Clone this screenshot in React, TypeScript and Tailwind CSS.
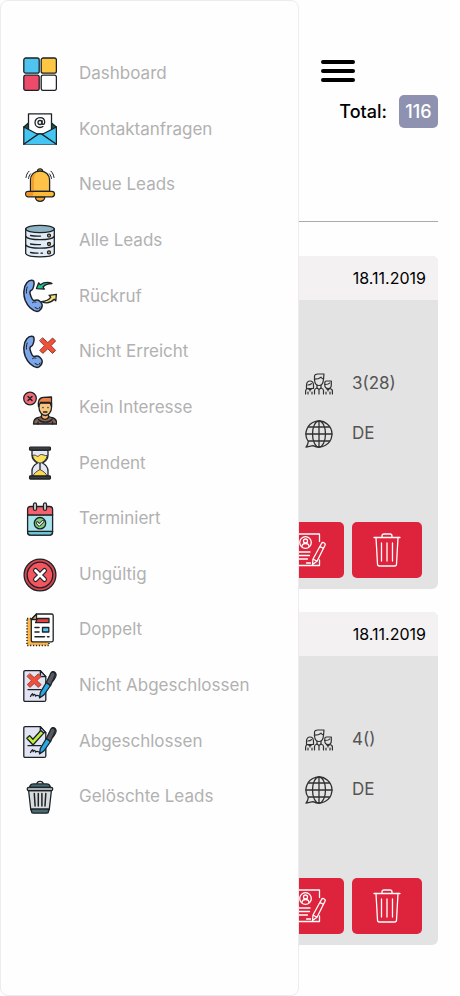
import type { ReactNode } from "react";

const INK = "#1c2226";

function Icon({ children }: { children: ReactNode }) {
  return (
    <svg
      width={34}
      height={34}
      viewBox="0 0 34 34"
      fill="none"
      stroke={INK}
      strokeWidth={1.3}
      strokeLinecap="round"
      strokeLinejoin="round"
      aria-hidden="true"
      className="shrink-0"
    >
      {children}
    </svg>
  );
}

function DashboardIcon() {
  return (
    <Icon>
      <rect x="0.8" y="1" width="15.4" height="15.2" rx="2" fill="#4fc4ee" />
      <rect x="18.2" y="1" width="15.2" height="15.2" rx="2" fill="#fdc743" />
      <rect x="0.8" y="18.2" width="15.4" height="15.2" rx="2" fill="#ee4a6a" />
      <rect x="18.2" y="18.2" width="15.2" height="15.2" rx="2" fill="#fff" />
    </Icon>
  );
}

function MailIcon() {
  return (
    <Icon>
      <path d="M0.8 15 5.5 11h23l4.9 4L28 20H6z" fill="#12584f" />
      <path d="M5.5 22V1.8h23V22z" fill="#fff" />
      <path d="M0.8 15 17 23.5 33.4 15v17.2H0.8z" fill="#45c5f2" />
      <path d="M0.8 32.2 14.5 22.6c1.6-1 3.4-1 5 0l13.9 9.6" fill="#45c5f2" />
      <circle cx="17" cy="10.5" r="2" />
      <path d="M19 8.6v2.6c0 2 2.7 1.6 2.7-1 0-2.8-2-4.6-4.7-4.6s-5 2.1-5 4.9 2.2 5 5 5c1.2 0 2.2-.3 3-.9" />
    </Icon>
  );
}

function BellIcon() {
  return (
    <Icon>
      <path d="M12.4 28.8c0 6 9.4 6 9.4 0z" fill="#f6a532" />
      <path d="M14.6 2.8c0-2.6 4.9-2.6 4.9 0v1.4h-4.9z" fill="#f6a532" />
      <path d="M7.5 23.5V12c0-5.4 4-9 9.5-9s9.6 3.6 9.6 9v11.5z" fill="#fdc247" />
      <path d="M8.3 22.8V12c0-4 2-6.5 5-7.5-2 3-2.4 6-2.4 9v9.3z" fill="#f29e2c" stroke="none" />
      <rect x="2.6" y="23.3" width="28.9" height="5.5" rx="2.7" fill="#fdb93a" />
      <path d="M5.2 28h4.5l1-4H5.2c-2.6 0-2.6 4 0 4z" fill="#ef9427" stroke="none" />
      <path d="M3 9.5c.3-2.5 1.3-4.6 3-6.3M5.6 10.5c.1-1.8.8-3.4 2-4.7M31 9.5c-.3-2.5-1.3-4.6-3-6.3M28.4 10.500c-.1-1.8-.8-3.4-2-4.7" strokeWidth="1" />
    </Icon>
  );
}

function DatabaseIcon() {
  return (
    <Icon>
      <path d="M2.7 5v24.5C5 34 29 34 31.3 29.5V5z" fill="#e2ecf5" />
      <ellipse cx="17" cy="5" rx="14.3" ry="3.7" fill="#91b4c4" />
      <path d="M2.7 12.5c3 4.2 25.6 4.2 28.6 0M2.7 21c3 4.2 25.6 4.2 28.6 0" />
      <path d="M7.5 11.5c3.5.7 6.500.8 10 .6M7.5 20c3.5.7 6.500.8 10 .6M7.5 28.5c2.5.6 5 .8 7.500.7M18 29.2h1.5" />
      <circle cx="26" cy="11.6" r="1.5" fill="#f0a84c" />
      <circle cx="26" cy="20" r="1.5" fill="#f0a84c" />
      <circle cx="26" cy="28.4" r="1.5" fill="#f0a84c" />
    </Icon>
  );
}

function Handset() {
  return (
    <>
      <path
        d="M4 3.6C5.5 1.7 8 1 9.9 1.500c1.5.5 1.4 2 1 4.5-.4 2.3-.8 4.6-2.6 5.2-2 .7-1.5 3.3-.4 6 1 2.6 2 4.5 3.4 4.3 1.7-.3 2.5-.7 4-.2 1.7.7 3.9 3.2 3.9 5 0 2.6-2.3 6-5 6.3-5.500-1.2-9.700-5.600-12-11.300C.2 16 .2 8.2 4 3.6z"
        fill="#7da7ec"
        strokeWidth="1.5"
      />
      <path d="M9.5 23.6c1.4-.8 2.5-.9 3.5-.4M12 28.5l2.6 1.2M16 29.5l1-1.500M4.2 8c-.8 2-.9 4-.7 6" strokeWidth="1" />
    </>
  );
}

function CallbackIcon() {
  return (
    <Icon>
      <Handset />
      <path d="M13.5 9.6 15.7 3.800l1.600 2C21 3.2 25 2.800 29 4.500c-4 0-7 1.200-9 3.500l1.400 2z" fill="#1fc58e" />
      <path d="M18.5 22.6c4.7-.3 7.6-2 9.3-4.5l-1.7-1.8 7.3-1-.6 6.5-1.6-1.5c-3.4 3.5-8 4.6-12.7 2.3z" fill="#fbe07a" />
    </Icon>
  );
}

function UnreachedIcon() {
  return (
    <Icon>
      <Handset />
      <path d="m19.8 3 5 4.6L29.6 3l3 3-4.6 4.7 4.6 4.7-3 3-4.8-4.6-5 4.6-3-3 4.7-4.7L16.8 6z" fill="#f0503a" stroke="#8e3a30" strokeWidth="1" />
    </Icon>
  );
}

function NoInterestIcon() {
  return (
    <Icon>
      <path d="M10.5 33c0-4 1.3-5.8 5-6.5l3-1h7l3 1c4 .7 5.3 2.5 5.3 6.5z" fill="#8b6354" />
      <path d="M18.5 22v4.5c1.8 2.5 5.2 2.5 7 0V22z" fill="#f3b36b" />
      <path d="M16 12h12.5v4.5c0 4.5-3 8-6.2 8S16 21 16 16.5z" fill="#fbc680" />
      <path d="M15.5 15.5c-.8-5 .5-9 5-9.2l8-.3v9.5l-1.5-4h-9.5z" fill="#f18246" />
      <path d="M15.5 28.5c3 3.6 10.5 3.6 13.5 0M20 16.5v.2M25 16.5v.2M20.5 21h3.5M15 31v2M29.5 31v2" />
      <circle cx="7" cy="7.5" r="6.3" fill="#f56b78" />
      <path d="m5 5.5 4 4m0-4-4 4" strokeWidth="1.5" />
    </Icon>
  );
}

function HourglassIcon() {
  return (
    <Icon>
      <path d="M9 4h16v5c0 4-2.8 6.5-5.5 8 2.7 1.5 5.5 4 5.5 8v5H9v-5c0-4 2.8-6.5 5.5-8C11.800 15.5 9 13 9 9z" fill="#e6e8f5" />
      <path d="M9.5 9.5c2.5-1.5 3.5.5 5 .8 1.6.3 2-2 4-1.8 2.300.2 3.500 1.500 5.800 1-.8 4-3.600 6.200-6.300 7.500h-2C13 15.5 10.2 13.5 9.5 9.5z" fill="#fde05b" strokeWidth=".8" />
      <path d="M10 30c.8-3 3.5-4.5 7-6.500 3.5 2 6.2 3.5 7 6.500z" fill="#fdd84f" strokeWidth=".8" />
      <path d="M17 17.5V23" />
      <rect x="6.6" y="1.2" width="20.8" height="3" rx=".8" fill="#3c4043" />
      <rect x="6.6" y="30" width="20.8" height="3" rx=".8" fill="#3c4043" />
    </Icon>
  );
}

function CalendarIcon() {
  return (
    <Icon>
      <path d="M4.6 12.5h25V30c0 2-1 3.2-3 3.2h-19c-2 0-3-1.2-3-3.2z" fill="#a6e3ea" />
      <path d="M4.6 29.3h25c-.3 2.6-1 3.9-3 3.9h-19c-2 0-3-1.3-3-3.9z" fill="#6fc3d6" />
      <path d="M4.6 13V7.5c0-2 1-3 3-3h19c2 0 3 1 3 3V13z" fill="#f4636d" />
      <rect x="10.5" y=".9" width="3" height="7.5" rx="1.5" fill="#dfe3e6" />
      <rect x="20.5" y=".9" width="3" height="7.5" rx="1.5" fill="#dfe3e6" />
      <circle cx="17" cy="21.2" r="5.7" fill="#83cf7c" />
      <path d="m14.2 20.8 2 2.2 3.7-3.5" strokeWidth="3" />
      <path d="m14.2 20.8 2 2.2 3.7-3.5" stroke="#fff" strokeWidth="1.2" />
    </Icon>
  );
}

function InvalidIcon() {
  return (
    <Icon>
      <circle cx="17" cy="17" r="15.9" fill="#dc4450" />
      <circle cx="17" cy="17" r="12.8" fill="#f4565f" />
      <path d="m12.5 12.5 9 9m0-9-9 9" strokeWidth="5" />
      <path d="m12.5 12.5 9 9m0-9-9 9" stroke="#fff" strokeWidth="2.8" />
    </Icon>
  );
}

function DuplicateIcon() {
  return (
    <Icon>
      <path d="M4 5.5h22v27H4z" fill="#fdb548" strokeDasharray="1.2 1.7" strokeLinecap="butt" strokeWidth="1.5" />
      <path d="M8.3 6.5 13.5 1h15c1.2 0 1.7.5 1.7 1.7v24.5c0 1.2-.5 1.7-1.7 1.7H10c-1.2 0-1.700-.5-1.700-1.700z" fill="#fff" />
      <path d="M8.3 6.5 13.5 1v5.5z" fill="#fdb548" />
      <path d="M14.5 5.5H26v4.2H12.5z" fill="#e93f43" />
      <path d="M19.5 14.5h6.3V19h-6.3z" fill="#55c8f2" />
      <path d="M12 14.5h4M12 19h4M12 23.8h9.5M24.5 23.8H26" strokeWidth="1.5" />
    </Icon>
  );
}

function Contract() {
  return (
    <>
      <path d="M2.3 1.6h15l5.5 6v23.3c0 1-.5 1.5-1.5 1.5h-19c-1 0-1.5-.5-1.5-1.5V3.1c0-1 .5-1.5 1.5-1.5z" fill="#e2e4f4" />
      <path d="M17.3 1.6v6h5.5z" fill="#c4c7dc" />
      <path d="M5 20.7h13M7.5 27.5c1.5-3.5 2.5-3.5 2.6-.8 1.2-2 2-1.5 2.4.3 1.3-1 2-.8 3.5 0" />
    </>
  );
}

function Pen() {
  return (
    <>
      <path d="M28.5 3.5c2.500-2 5.5.5 4.2 4-1 2-1.8 3.7-3.2 5" />
      <path d="m17.3 23.5 6-10 4.3 3-6.7 9.500-4.4 2.900z" fill="#27a9e5" />
      <path d="m23.300 13.500 4.500-9.300c1.300-2.500 5.500-.5 4.200 2.200l-4.400 10.100z" fill="#585863" />
    </>
  );
}

function NotClosedIcon() {
  return (
    <Icon>
      <Contract />
      <path d="m7 4.8 4.2 3.7 4.2-3.7 2.8 2.8-4.3 4 4.3 4-2.8 2.8-4.2-3.8L7 18.4l-2.8-2.8 4.2-4-4.2-4z" fill="#f0503a" stroke="#8e3a30" strokeWidth=".8" />
      <Pen />
    </Icon>
  );
}

function ClosedIcon() {
  return (
    <Icon>
      <Contract />
      <path d="m3.800 13.300 2.900-2.700 3.200 3.600L17.800 5.500l2.900 2.600L10 20z" fill="#c3ef43" />
      <Pen />
    </Icon>
  );
}

function BinIcon() {
  return (
    <Icon>
      <path d="M13.8 4.5c0-4.3 6.5-4.3 6.5 0" />
      <path d="M5.6 10.5 7.8 30h18.4l2.2-19.5z" fill="#d8dbdd" />
      <path d="M8.5 29h17v2.5c0 1-.6 1.7-1.6 1.7H10.1c-1 0-1.6-.7-1.6-1.7z" fill="#486a75" />
      <path d="M6.6 7.5c.3-2.3 1.4-3.6 4-3.6h12.8c2.6 0 3.7 1.3 4 3.6z" fill="#486a75" />
      <rect x="4.3" y="7.3" width="25.4" height="3.4" rx="1.5" fill="#a5afb3" />
      <path d="m11.3 13.5.8 12.5M15.3 13.5V26M18.9 13.5V26M22.8 13.5 22 26" strokeWidth="1.5" />
    </Icon>
  );
}

function PeopleIcon() {
  return (
    <svg width={28} height={22} viewBox="0 0 28 22" fill="none" stroke="#303030" strokeWidth={1.2} strokeLinecap="round" strokeLinejoin="round" aria-hidden="true">
      <path d="M9.5 7V3.5C9.5 1.5 11 1 13 1h6l-.6 6c-.3 3.5-2 5.5-4.4 5.5S9.800 10.5 9.5 7z" />
      <path d="M9.5 6.200c3 0 5-.6 6.500-2 .6 1 1.500 1.500 2.600 1.700M12 12v3l2 1.500 2-1.500v-3M14 16.5V21" />
      <path d="M1.5 12.5C1.5 9.5 3 8 5 8s3.5 1.5 3.5 4.500v3h-7z" />
      <path d="M2.8 12c2 0 3-.5 3.7-1.300M3 15.5 5 17l2-1.500M.6 21v-3c0-1.200.7-2 2-2.500M5 17v1M3 19v2M7 19v2" />
      <path d="M19.8 12V9.500c0-1 .6-1.500 1.700-1.500h4.800v4c0 2.200-1.500 3.500-3.200 3.500s-3.300-1.300-3.300-3.500z" />
      <path d="M20 11.5c2.500 0 4-.5 4.700-1.500M21.500 15.500 23 17l1.800-1.500c1.800.4 2.600 1.200 2.600 2.500v3M23 17v1M21 19v2M25 19v2M9.5 21v-3.500c0-1.200.8-2 2.500-2.500M18.5 21v-3.500c0-1.200-.8-2-2.500-2.500" />
    </svg>
  );
}

function GlobeIcon() {
  return (
    <svg width={28} height={28} viewBox="0 0 28 28" fill="none" stroke="#303030" strokeWidth={1.3} strokeLinecap="round" strokeLinejoin="round" aria-hidden="true">
      <path d="M3.3 21.5A13 13 0 1 1 8 25.600L1 27.200c1.300-1.500 2.100-3.300 2.300-5.700z" />
      <ellipse cx="14" cy="14" rx="6.5" ry="13" />
      <path d="M14 1v26M1 14h26M3.5 7h21M3.5 21h21" />
    </svg>
  );
}

function EditIcon() {
  return (
    <svg width={34} height={34} viewBox="0 0 34 34" fill="none" stroke="#fff" strokeWidth={1.3} strokeLinecap="round" strokeLinejoin="round" aria-hidden="true">
      <path d="M27.5 8.5V1H2v31.5h25.500V27" />
      <circle cx="13.5" cy="9.5" r="5.8" />
      <circle cx="13.5" cy="8" r="2" />
      <path d="M10 13.5c.2-4 6.8-4 7 0M6.5 19H18M6.5 22.5h11M6.5 26h9M14.5 30h4" />
      <path d="M29.5 10.5c1-2 4.5-.5 3.5 1.700l-8 16-4.500 3.300.5-5.500zM28 13.500l3.500 1.800M21 26l4 2.200" />
    </svg>
  );
}

function TrashIcon() {
  return (
    <svg width={28} height={34} viewBox="0 0 28 34" fill="none" stroke="#fff" strokeWidth={1.3} strokeLinecap="round" strokeLinejoin="round" aria-hidden="true">
      <path d="M1 4.5h26M9 4.5V3c0-1.3.7-2 2-2h6c1.3 0 2 .7 2 2v1.5" />
      <path d="m3 4.5 1.500 26.700c0 1.200.8 1.800 2 1.800h15c1.200 0 2-.6 2-1.800L25 4.500M8.500 10v18M14 10v18M19.500 10v18" />
    </svg>
  );
}

const menu = [
  { label: "Dashboard", icon: DashboardIcon },
  { label: "Kontaktanfragen", icon: MailIcon },
  { label: "Neue Leads", icon: BellIcon },
  { label: "Alle Leads", icon: DatabaseIcon },
  { label: "Rückruf", icon: CallbackIcon },
  { label: "Nicht Erreicht", icon: UnreachedIcon },
  { label: "Kein Interesse", icon: NoInterestIcon },
  { label: "Pendent", icon: HourglassIcon },
  { label: "Terminiert", icon: CalendarIcon },
  { label: "Ungültig", icon: InvalidIcon },
  { label: "Doppelt", icon: DuplicateIcon },
  { label: "Nicht Abgeschlossen", icon: NotClosedIcon },
  { label: "Abgeschlossen", icon: ClosedIcon },
  { label: "Gelöschte Leads", icon: BinIcon },
];

const leads = [
  { id: 1, date: "18.11.2019", people: "3(28)", language: "DE" },
  { id: 2, date: "18.11.2019", people: "4()", language: "DE" },
];

function Drawer() {
  return (
    <aside className="absolute inset-y-0 left-0 w-[65%] rounded-lg border border-[#ececec] bg-[#fefefe] pt-[45px]">
      <nav>
        <ul className="grid h-[779px] auto-rows-fr">
          {menu.map(({ label, icon: ItemIcon }) => (
            <li key={label} className="flex">
              <a href="#" className="flex flex-1 items-center gap-[22px] pl-[22px] text-[17px] text-[#b1b1b1]">
                <ItemIcon />
                {label}
              </a>
            </li>
          ))}
        </ul>
      </nav>
    </aside>
  );
}

function LeadCard({ date, people, language }: { date: string; people: string; language: string }) {
  return (
    <article className="overflow-hidden rounded-md bg-[#e3e3e3]">
      <header className="flex h-11 items-center justify-end bg-[#f3f1f2] pr-3 text-base text-black">
        <time>{date}</time>
      </header>
      <div className="flex flex-col items-end px-4 pt-[70px] pb-[11px] text-[17px] text-[#555]">
        <div className="flex w-[117px] flex-col gap-[22px]">
          <div className="flex h-7 items-center gap-[19px]">
            <PeopleIcon />
            <span>{people}</span>
          </div>
          <div className="flex h-7 items-center gap-[19px]">
            <GlobeIcon />
            <span>{language}</span>
          </div>
        </div>
        <div className="mt-[74px] flex gap-2">
          <button type="button" aria-label="Edit lead" className="flex h-14 w-[70px] items-center justify-center rounded-[5px] bg-[#de233d]">
            <EditIcon />
          </button>
          <button type="button" aria-label="Delete lead" className="flex h-14 w-[70px] items-center justify-center rounded-[5px] bg-[#de233d]">
            <TrashIcon />
          </button>
        </div>
      </div>
    </article>
  );
}

export default function App() {
  return (
    <div className="relative min-h-dvh bg-[#fefefe] pt-[60px] font-['Inter','Noto_Sans',sans-serif]">
      <div className="flex pl-[65%]">
        <button type="button" aria-label="Toggle menu" className="ml-[22px] flex w-[34px] flex-col gap-[5px]">
          <span className="h-1 w-full rounded-full bg-black" />
          <span className="h-1 w-full rounded-full bg-black" />
          <span className="h-1 w-full rounded-full bg-black" />
        </button>
      </div>

      <main className="px-[22px]">
        <div className="mt-[13px] flex items-center justify-end gap-3 text-lg font-medium text-black">
          <span>Total:</span>
          <span className="flex h-[33px] min-w-[39px] items-center justify-center rounded-[5px] bg-[#8e92b0] px-1 text-white">
            116
          </span>
        </div>
        <hr className="mt-[93px] border-[#aaaaae]" />
        <div className="mt-[34px] flex flex-col gap-[23px]">
          {leads.map((lead) => (
            <LeadCard key={lead.id} date={lead.date} people={lead.people} language={lead.language} />
          ))}
        </div>
      </main>

      <Drawer />
    </div>
  );
}
